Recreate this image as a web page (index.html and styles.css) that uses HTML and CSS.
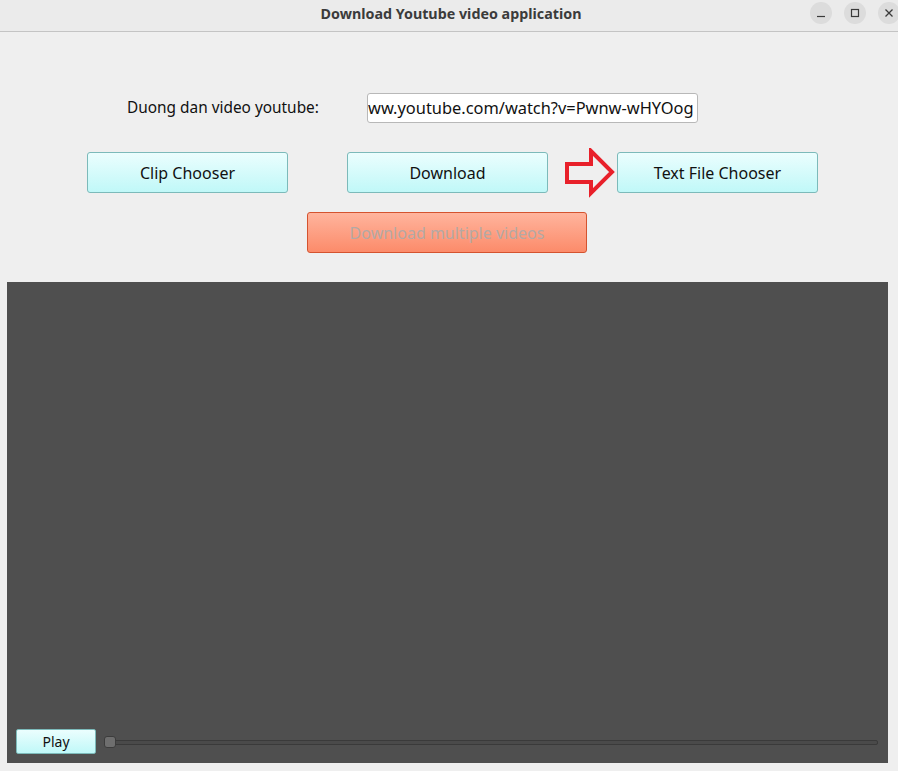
FILE: index.html
```html
<!DOCTYPE html>
<html>
<head>
<meta charset="utf-8">
<link rel="stylesheet" href="styles.css">
</head>
<body>
<div class="window">
  <div class="titlebar">
    <div class="title">Download Youtube video application</div>
    <div class="wctrls">
      <span class="wbtn"><svg width="10" height="10" viewBox="0 0 10 10"><line x1="1" y1="8.5" x2="9" y2="8.5" stroke="#3a3a3a" stroke-width="1.2"/></svg></span>
      <span class="wbtn"><svg width="10" height="10" viewBox="0 0 10 10"><rect x="1.5" y="1.5" width="7" height="7" fill="none" stroke="#3a3a3a" stroke-width="1.2"/></svg></span>
      <span class="wbtn"><svg width="10" height="10" viewBox="0 0 10 10"><path d="M1.5 1.5 L8.5 8.5 M8.5 1.5 L1.5 8.5" stroke="#3a3a3a" stroke-width="1.3"/></svg></span>
    </div>
  </div>
  <div class="content">
    <div class="row-url">
      <div class="label">Duong dan video youtube:</div>
      <div class="urlbox"><span>ww.youtube.com/watch?v=Pwnw-wHYOog</span></div>
    </div>
    <div class="row-btns">
      <button class="btn">Clip Chooser</button>
      <button class="btn btn-dl">Download</button>
      <div class="arrow-slot">
        <svg width="52" height="50" viewBox="0 0 52 50"><polygon points="2,16 26,16 26,3 47,24 26,45 26,34 2,34" fill="none" stroke="#e8202a" stroke-width="4"/></svg>
      </div>
      <button class="btn">Text File Chooser</button>
    </div>
    <div class="row-multi">
      <button class="btn-multi">Download multiple videos</button>
    </div>
    <div class="video">
      <div class="controls">
        <button class="btn-play">Play</button>
        <div class="slider">
          <div class="groove"></div>
          <div class="handle"></div>
        </div>
      </div>
    </div>
  </div>
</div>
</body>
</html>
```
FILE: styles.css
```css
* { box-sizing: border-box; }
html, body { margin: 0; padding: 0; }
body {
  width: 898px;
  height: 771px;
  overflow: hidden;
  background: #efefef;
  font-family: "Noto Sans", "DejaVu Sans", sans-serif;
  color: #111;
}
.window { width: 898px; height: 771px; display: flex; flex-direction: column; }
.titlebar {
  height: 32px;
  background: #ebebeb;
  border-bottom: 1px solid #c4c4c4;
  position: relative;
  display: flex;
  align-items: center;
  justify-content: center;
}
.title {
  font-weight: bold;
  font-size: 14.3px;
  color: #3b3b3b;
  padding-bottom: 4px;
  margin-left: 4px;
}
.wctrls {
  position: absolute;
  right: 0;
  top: 2px;
  display: flex;
  gap: 12px;
}
.wbtn {
  width: 22px;
  height: 22px;
  border-radius: 50%;
  background: #dcdcdc;
  display: flex;
  align-items: center;
  justify-content: center;
}
.wbtn:last-child { margin-right: -2px; }
.content { flex: 1; display: flex; flex-direction: column; }
.row-url {
  margin-top: 61px;
  height: 30px;
  display: flex;
  align-items: center;
  padding-left: 127px;
}
.label { width: 240px; font-size: 15.4px; padding-bottom: 2px; }
.urlbox {
  width: 331px;
  height: 30px;
  background: #fff;
  border: 1px solid #b8b8b8;
  border-radius: 3px;
  display: flex;
  justify-content: flex-start;
  align-items: center;
  overflow: hidden;
  white-space: nowrap;
  font-size: 16.4px;
  padding-left: 0px;
  padding-bottom: 1px;
}
.row-btns {
  margin-top: 29px;
  display: flex;
  align-items: center;
  padding-left: 87px;
  height: 41px;
}
.btn {
  width: 201px;
  height: 41px;
  border: 1px solid #7cbaba;
  border-radius: 3px;
  background: linear-gradient(#ebfefe, #c0f8f8);
  font-family: inherit;
  font-size: 16px;
  color: #111;
  padding: 0;
}
.btn-dl { margin-left: 59px; }
.arrow-slot {
  width: 69px;
  display: flex;
  justify-content: flex-start;
  padding-left: 17px;
}
.arrow-slot svg { display: block; }
.row-multi {
  margin-top: 19px;
  padding-left: 307px;
}
.btn-multi {
  width: 280px;
  height: 41px;
  border: 1px solid #d4532f;
  border-radius: 3px;
  background: linear-gradient(#ffb49d, #fc8b6a);
  font-family: inherit;
  font-size: 16px;
  color: #b4a9a5;
  padding: 0;
}
.video {
  margin-top: 29px;
  margin-left: 7px;
  width: 881px;
  height: 481px;
  background: #4f4f4f;
  display: flex;
  flex-direction: column;
  justify-content: flex-end;
}
.controls {
  display: flex;
  align-items: center;
  padding: 0 10px 9px 9px;
  gap: 8px;
}
.btn-play {
  width: 80px;
  height: 25px;
  border: 1px solid #7cbaba;
  border-radius: 2px;
  background: linear-gradient(#ebfefe, #c0f8f8);
  font-family: inherit;
  font-size: 14px;
  color: #111;
  padding: 0 0 1px 0;
}
.slider {
  flex: 1;
  height: 12px;
  position: relative;
}
.groove {
  position: absolute;
  left: 4px;
  right: 0;
  top: 4px;
  height: 5px;
  border: 1px solid #3a3a3a;
  border-radius: 2px;
  background: #4a4a4a;
}
.handle {
  position: absolute;
  left: 0;
  top: 0;
  width: 12px;
  height: 12px;
  border-radius: 3px;
  background: #6e6e6e;
  border: 1px solid #3c3c3c;
}
```
